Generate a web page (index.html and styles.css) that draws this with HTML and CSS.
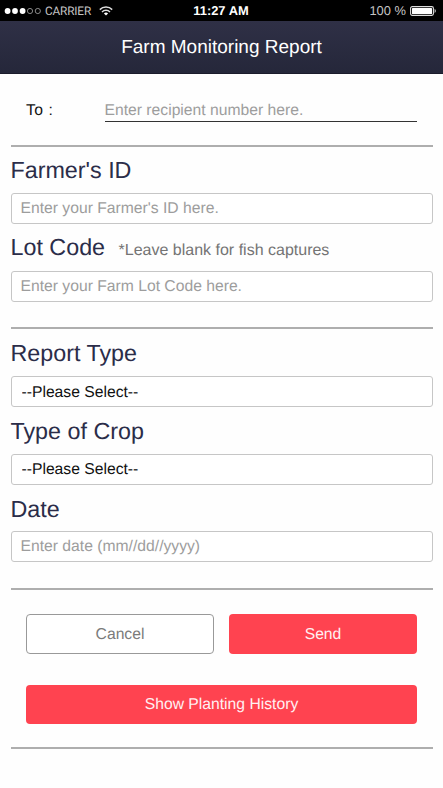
FILE: index.html
```html
<!DOCTYPE html>
<html lang="en">
<head>
<meta charset="utf-8">
<title>Farm Monitoring Report</title>
<link rel="stylesheet" href="styles.css">
</head>
<body>
<div class="status">
  <div class="status-left">
    <svg class="signal" width="38" height="8" viewBox="0 0 38 8">
      <g fill="#fff"><circle cx="3.6" cy="4" r="2.9"/><circle cx="11" cy="4" r="2.9"/><circle cx="18.6" cy="4" r="2.9"/></g>
      <g fill="none" stroke="#aaa" stroke-width=".8"><circle cx="26" cy="4" r="2.6"/><circle cx="33.8" cy="4" r="2.6"/></g>
    </svg>
    <span class="carrier">CARRIER</span>
    <svg class="wifi" width="14" height="10" viewBox="0 0 14 10">
      <g fill="none" stroke="#ddd" stroke-width="1.5"><path d="M.8 3.6a8.8 8.8 0 0 1 12.4 0"/><path d="M3 6a5.7 5.7 0 0 1 8 0"/></g>
      <path fill="#fff" d="M7 9.6L4.9 7.5a3 3 0 0 1 4.2 0z"/>
    </svg>
  </div>
  <span class="clock">11:27 AM</span>
  <div class="status-right">
    <span class="percent">100 %</span>
    <svg width="28" height="10" viewBox="0 0 28 10">
      <rect x=".6" y=".6" width="22.8" height="8.8" rx="1.6" fill="none" stroke="#ddd" stroke-width="1.1"/>
      <rect x="2" y="2" width="20" height="6" rx=".5" fill="#fff"/>
      <path d="M24.6 2.8q2.4 2.2 0 4.4z" fill="#ddd"/>
    </svg>
  </div>
</div>
<header class="title-bar"><h1>Farm Monitoring Report</h1></header>
<form class="form">
  <div class="recipient">
    <label for="to">To :</label>
    <input id="to" type="text" placeholder="Enter recipient number here.">
  </div>
  <section class="group farm">
    <div class="field">
      <div class="heading"><label for="farmer">Farmer's ID</label></div>
      <input class="box" id="farmer" type="text" placeholder="Enter your Farmer's ID here.">
    </div>
    <div class="field">
      <div class="heading"><label for="lot">Lot Code</label><span class="hint">*Leave blank for fish captures</span></div>
      <input class="box" id="lot" type="text" placeholder="Enter your Farm Lot Code here.">
    </div>
  </section>
  <section class="group report">
    <div class="field">
      <div class="heading"><label for="type">Report Type</label></div>
      <select class="box" id="type"><option>--Please Select--</option></select>
    </div>
    <div class="field">
      <div class="heading"><label for="crop">Type of Crop</label></div>
      <select class="box" id="crop"><option>--Please Select--</option></select>
    </div>
    <div class="field">
      <div class="heading"><label for="date">Date</label></div>
      <input class="box" id="date" type="text" placeholder="Enter date (mm//dd//yyyy)">
    </div>
  </section>
  <section class="actions">
    <button class="button cancel" type="button">Cancel</button>
    <button class="button" type="button">Send</button>
    <button class="button history" type="button">Show Planting History</button>
  </section>
</form>
</body>
</html>
```
FILE: styles.css
```css
* { box-sizing: border-box; }
body {
  margin: 0;
  background: #fefefe;
  color: #111;
  font: 15.7px/18px "Liberation Sans", Arial, sans-serif;
  text-rendering: geometricPrecision;
}
.status {
  display: grid;
  grid-template-columns: 1fr auto 1fr;
  align-items: center;
  height: 21px;
  padding: 0 5px 0 4px;
  background: #000;
  color: #fff;
}
.status-left, .status-right { display: flex; align-items: center; }
.status-right { justify-content: flex-end; gap: 4px; }
.carrier {
  width: 46px;
  margin-left: 3px;
  color: #c4c4c4;
  font: 11.8px/20px Roboto, sans-serif;
  letter-spacing: -.15px;
}
.wifi { margin-left: 8px; }
.clock { font-size: 12.9px; font-weight: 700; }
.percent { color: #c4c4c4; font-size: 12.9px; }
.title-bar {
  display: flex;
  align-items: center;
  justify-content: center;
  height: 53px;
  padding-top: 2px;
  border-bottom: 1px solid #1b1c2b;
  background: linear-gradient(#2f3046, #25273a);
}
h1 { margin: 0; color: #fff; font-size: 19px; font-weight: 400; line-height: 24px; }
.form { padding: 0 10.5px; }
.recipient {
  display: flex;
  height: 73px;
  padding: 26px 15.5px 0;
  border-bottom: 2px solid #aeaeae;
}
.recipient label { width: 78.5px; padding-top: 1px; line-height: 20px; letter-spacing: .5px; }
input, select, button { font: inherit; color: inherit; text-rendering: inherit; }
input::placeholder { color: #9d9d9d; opacity: 1; }
.recipient input {
  flex: 1;
  min-width: 0;
  height: 22px;
  padding: 0;
  border: 0;
  border-bottom: 1.5px solid #333;
  background: none;
}
.group { border-bottom: 2px solid #aeaeae; }
.farm { height: 182px; }
.report { height: 261px; }
.heading {
  display: flex;
  align-items: baseline;
  height: 46px;
  padding-top: 8px;
  color: #2b2d49;
  font-size: 23.3px;
  line-height: 30px;
}
.field + .field .heading { height: 46.5px; }
.report .heading { height: 47px; }
.report .heading { padding-top: 9px; }
.hint { margin-left: 13.5px; color: #747474; font-size: 16px; }
.box {
  display: block;
  width: 100%;
  height: 31px;
  padding: 1px 9px 0;
  border: 1px solid #c6c6c6;
  border-radius: 3px;
  background: #fff;
}
select.box { appearance: none; padding: 2px 10px 0; }
.actions {
  display: grid;
  grid-template-columns: 1fr 1fr;
  gap: 31px 15px;
  height: 159px;
  padding: 24px 15.5px;
  border-bottom: 2px solid #aeaeae;
}
.button {
  height: 39.5px;
  padding: 2px 0 0;
  border: 0;
  border-radius: 4px;
  background: #ff4350;
  color: #fff0f2;
}
.cancel { border: 1.5px solid #999; background: #fff; color: #7b7b7b; }
.history { grid-column: 1 / -1; }
```
